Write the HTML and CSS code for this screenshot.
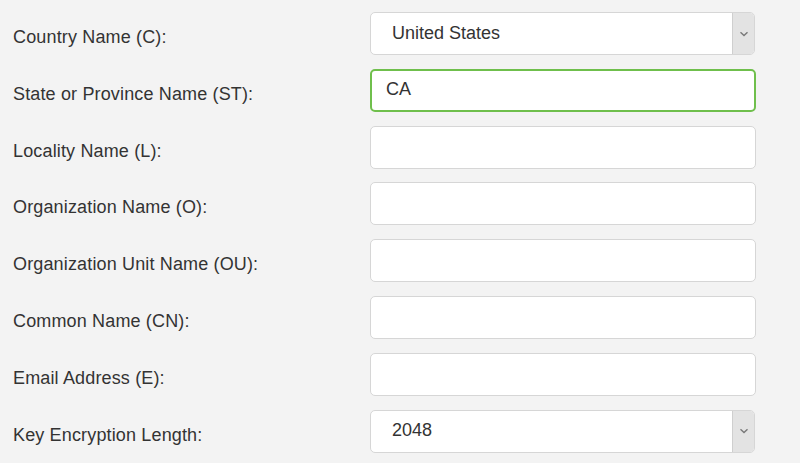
FILE: index.html
```html
<!DOCTYPE html>
<html>
<head>
<meta charset="utf-8">
<link rel="stylesheet" href="styles.css">
</head>
<body>
<div class="form">
  <div class="row">
    <div class="label">Country Name (C):</div>
    <div class="field select"><span class="value">United States</span><span class="arrow"><svg width="10" height="6" viewBox="0 0 10 6"><path d="M1.5 1.2 L5 4.6 L8.5 1.2" fill="none" stroke="#7a7a7a" stroke-width="1.4"/></svg></span></div>
  </div>
  <div class="row">
    <div class="label">State or Province Name (ST):</div>
    <div class="field focus"><span class="value">CA</span></div>
  </div>
  <div class="row">
    <div class="label">Locality Name (L):</div>
    <div class="field"></div>
  </div>
  <div class="row">
    <div class="label">Organization Name (O):</div>
    <div class="field"></div>
  </div>
  <div class="row">
    <div class="label">Organization Unit Name (OU):</div>
    <div class="field"></div>
  </div>
  <div class="row">
    <div class="label">Common Name (CN):</div>
    <div class="field"></div>
  </div>
  <div class="row">
    <div class="label">Email Address (E):</div>
    <div class="field"></div>
  </div>
  <div class="row">
    <div class="label">Key Encryption Length:</div>
    <div class="field select"><span class="value">2048</span><span class="arrow"><svg width="10" height="6" viewBox="0 0 10 6"><path d="M1.5 1.2 L5 4.6 L8.5 1.2" fill="none" stroke="#7a7a7a" stroke-width="1.4"/></svg></span></div>
  </div>
</div>
</body>
</html>
```
FILE: styles.css
```css
html, body {
  margin: 0;
  padding: 0;
  background: #f3f3f3;
  width: 800px;
  height: 463px;
  overflow: hidden;
}
body {
  font-family: "Liberation Sans", Arial, sans-serif;
  color: #333333;
  font-size: 18px;
}
.form {
  display: flex;
  flex-direction: column;
  gap: 13.8px;
  padding: 12px 0 0 13px;
}
.row {
  display: flex;
  align-items: center;
  height: 43px;
}
.label {
  width: 357px;
  padding-top: 7px;
  line-height: 20px;
  letter-spacing: 0.15px;
}
.field {
  box-sizing: border-box;
  width: 386px;
  height: 43px;
  background: #ffffff;
  border: 1px solid #d6d6d6;
  border-radius: 5px;
  display: flex;
  align-items: center;
}
.field .value {
  padding-left: 21px;
  flex: 1;
  padding-bottom: 1px;
}
.field.focus {
  border: 2px solid #6fbf4c;
}
.field.focus .value {
  padding-left: 14px;
}
.select {
  width: 385px;
  overflow: hidden;
}
.arrow {
  box-sizing: border-box;
  width: 22px;
  height: 100%;
  background: #e3e3e3;
  border-left: 1px solid #cfcfcf;
  display: flex;
  align-items: center;
  justify-content: center;
}
```
